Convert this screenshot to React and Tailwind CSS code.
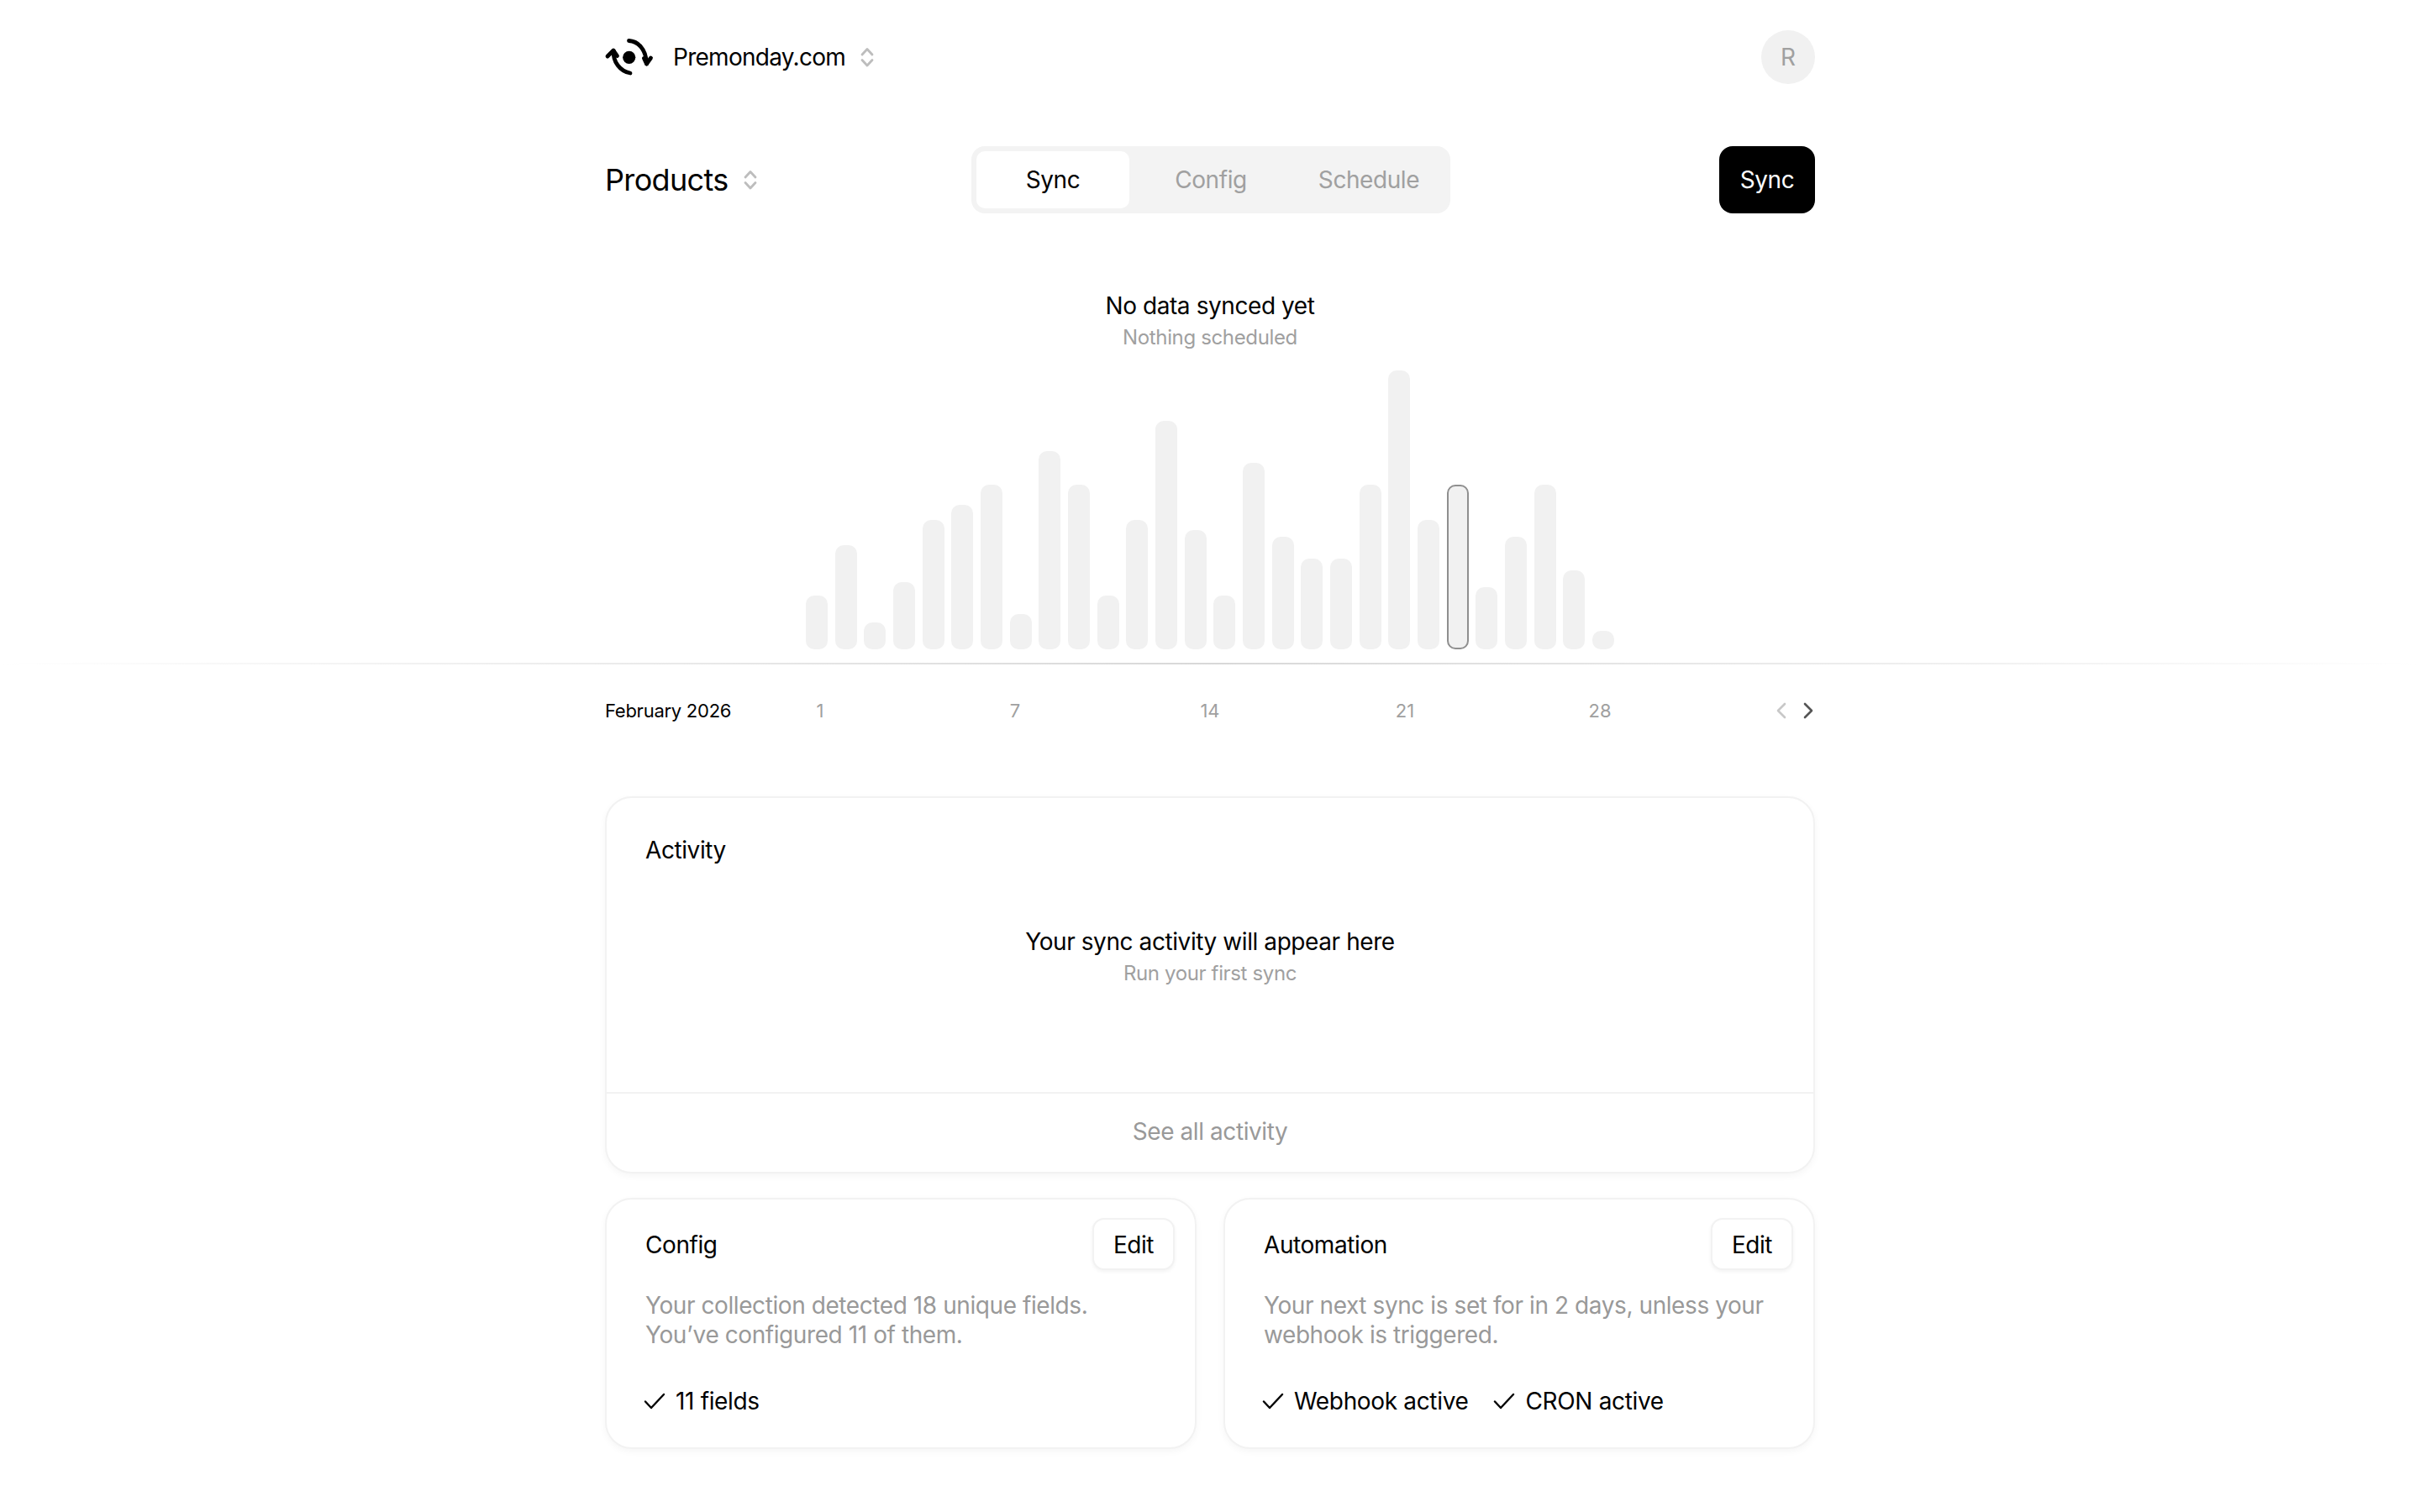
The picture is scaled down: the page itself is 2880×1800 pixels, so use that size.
const BAR_HEIGHTS = [64, 124, 32, 80, 154, 172, 196, 42, 236, 196, 64, 154, 272, 142, 64, 222, 134, 108, 108, 196, 332, 154, 196, 74, 134, 196, 94, 22];
const SELECTED_BAR = 22;
const DAY_LABELS = ['1', '7', '14', '21', '28'];

// Two arrows turning round a dot
const Logo = () => (
  <svg width="60" height="46" viewBox="0 0 60 46" fill="none" stroke="#000" strokeWidth="4.8" strokeLinecap="round" strokeLinejoin="round" className="-ml-[1px]">
    <circle cx="29.7" cy="23.3" r="7.6" fill="#000" stroke="none" />
    <path d="M29.5 3.5C39 4 50 12 50.5 31" />
    <path d="M47.5 24.5L50.5 31L55.5 24" />
    <path d="M11.5 16C10 28 19 40 31 42" />
    <path d="M4 22L11 15L15.5 21.5" />
  </svg>
);

const Updown = () => (
  <svg width="16" height="24" viewBox="0 0 16 24" fill="none" stroke="#bdbdbd" strokeWidth="2.8" strokeLinecap="round" strokeLinejoin="round">
    <path d="M2 9L8 2.5L14 9" />
    <path d="M2 15.5L8 22L14 15.5" />
  </svg>
);

const Arrow = ({ color, d }) => (
  <svg width="12" height="20" viewBox="0 0 12 20" fill="none" stroke={color} strokeWidth="2.6" strokeLinecap="round" strokeLinejoin="round">
    <path d={d} />
  </svg>
);

const CheckItem = ({ label }) => (
  <div className="flex items-center gap-[12px] text-[28px] leading-[36px] tracking-[-0.012em] text-black">
    <svg width="26" height="20" viewBox="0 0 26 20" fill="none" stroke="#000" strokeWidth="2.4" strokeLinecap="round" strokeLinejoin="round" className="-ml-[2px]">
      <path d="M2 10.5L9 18L24 2" />
    </svg>
    <span>{label}</span>
  </div>
);

const InfoCard = ({ title, text, items }) => (
  <div className="flex h-[299px] flex-col rounded-[32px] border-2 border-[#f2f2f2] bg-white pl-[46px] pr-[24px] pt-[22px] shadow-[0_3px_8px_rgba(0,0,0,0.04)]">
    <div className="flex h-[62px] items-center justify-between">
      <span className="pt-[2px] text-[28px] tracking-[-0.015em] text-black">{title}</span>
      <button className="h-[62px] w-[98px] rounded-[14px] border-2 border-[#f2f2f2] bg-white pt-[2px] text-[28px] tracking-[-0.015em] text-black shadow-[0_2px_4px_rgba(0,0,0,0.05)]">
        Edit
      </button>
    </div>
    <p className="mt-[25px] pr-[12px] text-[28px] leading-[34.5px] tracking-[-0.015em] text-[#999999]">{text}</p>
    <div className="mt-[44px] flex gap-[32px]">
      {items.map((item) => (
        <CheckItem key={item} label={item} />
      ))}
    </div>
  </div>
);

const App = () => {
  return (
    <div className="min-h-[1800px] bg-white font-[family-name:Inter,sans-serif] text-black">
      <div className="mx-auto w-[1440px]">
        <header className="mt-[36px] flex h-[64px] items-center justify-between">
          <div className="flex items-center">
            <Logo />
            <span className="ml-[22px] text-[28px] tracking-[-0.026em]">Premonday.com</span>
            <span className="ml-[18px]"><Updown /></span>
          </div>
          <div className="flex h-[64px] w-[64px] items-center justify-center rounded-full bg-[#f1f1f1] text-[28px] text-[#a0a0a0]">R</div>
        </header>

        <div className="mt-[74px] flex h-[80px] items-center justify-between">
          <div className="flex w-[301px] items-center">
            <span className="text-[36px] tracking-[-0.018em]">Products</span>
            <span className="ml-[18px]"><Updown /></span>
          </div>
          <div className="flex h-[80px] w-[570px] gap-[6px] rounded-[16px] bg-[#f3f3f3] p-[6px]">
            <div className="flex w-[182px] items-center justify-center rounded-[10px] bg-white text-[28px] tracking-[-0.015em] text-black">Sync</div>
            <div className="flex w-[182px] items-center justify-center text-[28px] tracking-[-0.015em] text-[#a0a0a0]">Config</div>
            <div className="flex w-[182px] items-center justify-center text-[28px] tracking-[-0.015em] text-[#a0a0a0]">Schedule</div>
          </div>
          <div className="flex w-[299px] justify-end">
            <button className="h-[80px] w-[114px] rounded-[16px] bg-black text-[28px] tracking-[-0.015em] text-white">Sync</button>
          </div>
        </div>

        <div className="mt-[92px] text-center">
          <div className="text-[28px] leading-[36px] tracking-[-0.015em]">No data synced yet</div>
          <div className="mt-[4px] text-[24px] leading-[32px] tracking-[-0.015em] text-[#a0a0a0]">Nothing scheduled</div>
        </div>

        <div className="mt-[23px] flex h-[332px] items-end justify-center gap-[8.67px]">
          {BAR_HEIGHTS.map((height, i) => (
            <div
              key={i}
              style={{ height }}
              className={`w-[26px] rounded-[10px] bg-[#f1f1f1] ${i === SELECTED_BAR ? 'border-2 border-[#8f8f8f]' : ''}`}
            />
          ))}
        </div>
      </div>

      <div className="mt-[16px] h-[2px] bg-linear-to-r from-transparent via-[#d8d8d8] to-transparent" />

      <div className="mx-auto w-[1440px]">
        <div className="mt-[37px] flex h-[36px] items-center">
          <span className="w-[240px] text-[22px] tracking-[-0.012em]">February 2026</span>
          <div className="flex w-[960px] justify-between">
            {DAY_LABELS.map((day) => (
              <span key={day} className="w-[32px] text-center text-[22px] text-[#a0a0a0]">{day}</span>
            ))}
          </div>
          <div className="ml-auto flex items-center gap-[20px] pr-[2px]">
            <Arrow color="#c8c8c8" d="M10 2L2 10L10 18" />
            <Arrow color="#555555" d="M2 2L10 10L2 18" />
          </div>
        </div>

        <section className="mt-[84px] flex h-[449px] flex-col rounded-[32px] border-2 border-[#f2f2f2] bg-white shadow-[0_3px_8px_rgba(0,0,0,0.04)]">
          <div className="px-[46px] pt-[44px] text-[28px] leading-[36px] tracking-[-0.015em]">Activity</div>
          <div className="mt-[73px] text-center">
            <div className="text-[28px] leading-[36px] tracking-[-0.015em]">Your sync activity will appear here</div>
            <div className="mt-[4px] text-[24px] leading-[32px] tracking-[-0.015em] text-[#a0a0a0]">Run your first sync</div>
          </div>
          <div className="mt-auto flex h-[95px] items-center justify-center border-t-2 border-[#f2f2f2] pb-[3px] text-[28px] tracking-[-0.015em] text-[#999999]">
            See all activity
          </div>
        </section>

        <div className="mt-[29px] grid grid-cols-2 gap-[32px]">
          <InfoCard
            title="Config"
            text={<>Your collection detected 18 unique fields.<br />You’ve configured 11 of them.</>}
            items={['11 fields']}
          />
          <InfoCard
            title="Automation"
            text="Your next sync is set for in 2 days, unless your webhook is triggered."
            items={['Webhook active', 'CRON active']}
          />
        </div>
      </div>
    </div>
  );
};

export default App;
